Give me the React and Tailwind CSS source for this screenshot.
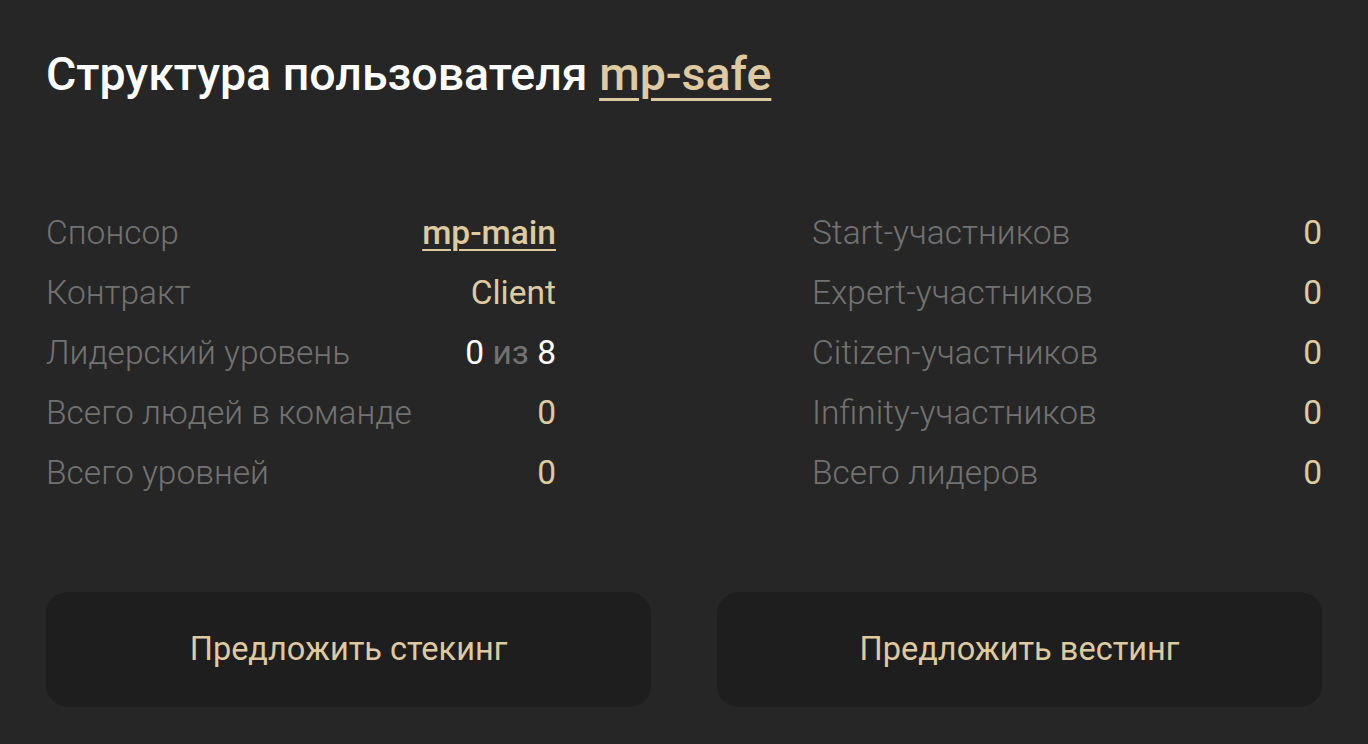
import React from 'react';

const leftRows = [
  { label: 'Спонсор', value: <a href="#" className="font-medium underline decoration-2 underline-offset-[5px] text-[#dfc9a0]">mp-main</a> },
  { label: 'Контракт', value: <span className="text-[#dfc9a0]">Client</span> },
  {
    label: 'Лидерский уровень',
    value: (
      <span className="text-white">
        0 <span className="text-[#727272]">из</span> 8
      </span>
    ),
  },
  { label: 'Всего людей в команде', value: <span className="text-[#dfc9a0]">0</span> },
  { label: 'Всего уровней', value: <span className="text-[#dfc9a0]">0</span> },
];

const rightRows = [
  'Start-участников',
  'Expert-участников',
  'Citizen-участников',
  'Infinity-участников',
  'Всего лидеров',
];

const Row = ({ label, children }) => (
  <div className="flex items-center justify-between h-[60px]">
    <span className="font-light text-[#727272]">{label}</span>
    {children}
  </div>
);

export default function App() {
  return (
    <div
      className="min-h-screen w-full bg-[#262626] px-[46px] pt-[49px]"
      style={{ fontFamily: 'Roboto, "Noto Sans", sans-serif' }}
    >
      {/* заголовок */}
      <h1 className="text-[46.5px] leading-[50px] font-medium text-white">
        Структура пользователя{' '}
        <a href="#" className="text-[#dfc9a0] underline decoration-[3px] underline-offset-[8px]">
          mp-safe
        </a>
      </h1>

      {/* статистика */}
      <div className="mt-[104px] flex justify-between text-[33.5px] leading-[60px]">
        <div className="w-[510px]">
          {leftRows.map(r => (
            <Row key={r.label} label={r.label}>{r.value}</Row>
          ))}
        </div>
        <div className="w-[510px]">
          {rightRows.map(l => (
            <Row key={l} label={l}>
              <span className="text-[#dfc9a0]">0</span>
            </Row>
          ))}
        </div>
      </div>

      {/* кнопки */}
      <div className="mt-[89px] grid grid-cols-2 gap-[66px]">
        <button className="h-[115px] rounded-[22px] bg-[#1e1e1e] text-[32.5px] text-[#dfc9a0]">
          Предложить стекинг
        </button>
        <button className="h-[115px] rounded-[22px] bg-[#1e1e1e] text-[32.5px] text-[#dfc9a0]">
          Предложить вестинг
        </button>
      </div>
    </div>
  );
}
